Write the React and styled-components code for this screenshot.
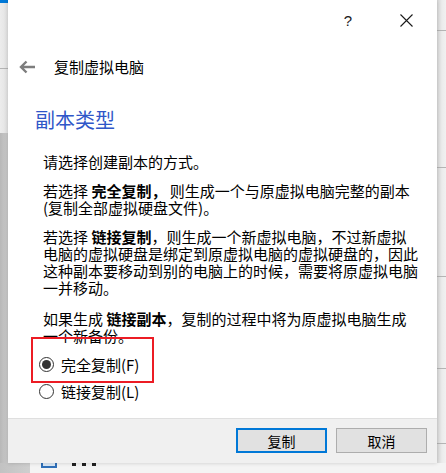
import React from "react";
import styled, { createGlobalStyle } from "styled-components";

const CJK = `"Noto Sans CJK SC", "Liberation Sans", sans-serif`;

const GlobalStyle = createGlobalStyle`
  html, body {
    margin: 0;
    padding: 0;
    background: #f2f2f2;
    overflow: hidden;
  }
  * { box-sizing: border-box; }
`;

const Page = styled.div`
  display: grid;
  grid-template-columns: 8px 429px 9px;
  grid-template-rows: 463px 10px;
  width: 446px;
  height: 473px;
  overflow: hidden;
  font-family: ${CJK};
`;

const LeftStrip = styled.div`
  display: flex;
  flex-direction: column;
`;

const StripBlock = styled.div`
  height: ${(p) => p.$h}px;
  flex: ${(p) => (p.$fill ? 1 : "none")};
  background: ${(p) => p.$bg};
  border-bottom: ${(p) => (p.$line ? "1px solid #b4b4b4" : "none")};
`;

const RightStrip = styled.div`
  display: flex;
  flex-direction: column;
  background: linear-gradient(to right, #d9d9d9, #ececec 60%, #f1f1f1);
`;

const Dialog = styled.div`
  display: flex;
  flex-direction: column;
  background: #ffffff;
  box-shadow: 0 0 4px rgba(0, 0, 0, 0.18);
  position: relative;
  z-index: 1;
`;

const TitleBar = styled.div`
  height: 40px;
  display: flex;
  justify-content: flex-end;
  align-items: center;
  padding-right: 2px;
`;

const CaptionButton = styled.div`
  width: 58px;
  height: 40px;
  display: flex;
  align-items: center;
  justify-content: center;
  color: #1a1a1a;
  font-family: "Liberation Sans", sans-serif;
  font-size: 15px;
`;

const NavRow = styled.div`
  height: 54px;
  display: flex;
  align-items: center;
  padding-left: 11px;
  gap: 19px;
`;

const NavTitle = styled.div`
  font-size: 15px;
  color: #000;
  line-height: 20px;
`;

const Main = styled.div`
  flex: 1;
  padding: 14px 0 0 27px;
`;

const Heading = styled.h1`
  margin: 0 0 21px 0;
  font-size: 20px;
  line-height: 24px;
  font-weight: normal;
  color: #2f56c8;
`;

const Body = styled.div`
  padding-left: 8px;
  width: 400px;
`;

const Para = styled.p`
  margin: 0 0 ${(p) => p.$after}px 0;
  font-size: 15px;
  line-height: 17px;
  color: #000;
  white-space: nowrap;
`;

const RadioGroup = styled.div`
  position: relative;
  display: flex;
  flex-direction: column;
  gap: 7px;
  margin: 10px 0 0 -4px;
`;

const RadioRow = styled.label`
  display: flex;
  align-items: center;
  height: 20px;
  gap: 7px;
  font-size: 15px;
  color: #000;
`;

const RadioCircle = styled.span`
  width: 15px;
  height: 15px;
  border-radius: 50%;
  border: 1px solid #333;
  background: #fff;
  display: flex;
  align-items: center;
  justify-content: center;
  &::after {
    content: "";
    width: 9px;
    height: 9px;
    border-radius: 50%;
    background: ${(p) => (p.$checked ? "#333" : "transparent")};
  }
`;

const Highlight = styled.div`
  position: absolute;
  left: -8px;
  top: -17px;
  width: 123px;
  height: 46px;
  border: 2px solid #ec1c24;
  pointer-events: none;
`;

const Footer = styled.div`
  height: 45px;
  background: #f0f0f0;
  border-top: 1px solid #dfdfdf;
  display: flex;
  justify-content: flex-end;
  align-items: flex-start;
  gap: 9px;
  padding: 9px 10px 0 0;
`;

const Button = styled.button`
  width: 91px;
  height: 25px;
  background: #e1e1e1;
  border: ${(p) => (p.$primary ? "2px solid #0078d7" : "1px solid #adadad")};
  font-family: ${CJK};
  font-size: 14px;
  color: #000;
  padding: 0;
  line-height: 20px;
`;

const BottomStrip = styled.div`
  grid-column: 1 / 4;
  display: flex;
  background: #f4f4f4;
`;

const BottomGray = styled.div`
  width: 30px;
  background: linear-gradient(to right, #c2c2c2, #cfcfcf);
`;

const BottomIcon = styled.div`
  width: 16px;
  height: 5px;
  margin-left: 11px;
  border: 2px solid #2f6fb8;
  border-top: none;
  background: #dbe8f5;
`;

const BottomText = styled.div`
  margin-left: 15px;
  display: flex;
  gap: 6px;
`;

const Dot = styled.span`
  width: 4px;
  height: 3px;
  background: #222;
`;

function BackArrow() {
  return (
    <svg width="16" height="14" viewBox="0 0 16 14">
      <path d="M16 7H2.5M7.5 1.5L2 7l5.5 5.5" fill="none" stroke="#7d7d7d" strokeWidth="2.4" />
    </svg>
  );
}

function CloseIcon() {
  return (
    <svg width="13" height="13" viewBox="0 0 13 13">
      <path d="M0.5 0.5L12.5 12.5M12.5 0.5L0.5 12.5" stroke="#1a1a1a" strokeWidth="1.1" />
    </svg>
  );
}

export default function App() {
  return (
    <>
      <GlobalStyle />
      <Page>
        <LeftStrip>
          <StripBlock $h={3} $bg="#0078d7" />
          <StripBlock $h={66} $bg="linear-gradient(to right, #ececec, #e2e2e2)" $line />
          <StripBlock $h={64} $bg="linear-gradient(to right, #ececec, #e2e2e2)" />
          <StripBlock $fill $bg="linear-gradient(to right, #b8b8b8, #cbcbcb)" />
        </LeftStrip>

        <Dialog>
          <TitleBar>
            <CaptionButton>?</CaptionButton>
            <CaptionButton>
              <CloseIcon />
            </CaptionButton>
          </TitleBar>

          <NavRow>
            <BackArrow />
            <NavTitle>复制虚拟电脑</NavTitle>
          </NavRow>

          <Main>
            <Heading>副本类型</Heading>
            <Body>
              <Para $after={12}>请选择创建副本的方式。</Para>
              <Para $after={12}>
                若选择 <b>完全复制，</b> 则生成一个与原虚拟电脑完整的副本
                <br />
                (复制全部虚拟硬盘文件)。
              </Para>
              <Para $after={14}>
                若选择 <b>链接复制</b>，则生成一个新虚拟电脑，不过新虚拟
                <br />
                电脑的虚拟硬盘是绑定到原虚拟电脑的虚拟硬盘的，因此
                <br />
                这种副本要移动到别的电脑上的时候，需要将原虚拟电脑
                <br />
                一并移动。
              </Para>
              <Para $after={0}>
                如果生成 <b>链接副本</b>，复制的过程中将为原虚拟电脑生成
                <br />
                一个新备份。
              </Para>
              <RadioGroup>
                <RadioRow>
                  <RadioCircle $checked />
                  完全复制(F)
                </RadioRow>
                <RadioRow>
                  <RadioCircle />
                  链接复制(L)
                </RadioRow>
                <Highlight />
              </RadioGroup>
            </Body>
          </Main>

          <Footer>
            <Button $primary>复制</Button>
            <Button>取消</Button>
          </Footer>
        </Dialog>

        <RightStrip>
          <StripBlock $h={31} $bg="transparent" $line />
          <StripBlock $h={137} $bg="transparent" $line />
          <StripBlock $h={109} $bg="transparent" $line />
          <StripBlock $h={92} $bg="transparent" $line />
          <StripBlock $h={75} $bg="transparent" $line />
          <StripBlock $fill $bg="transparent" />
        </RightStrip>

        <BottomStrip>
          <BottomGray />
          <BottomIcon />
          <BottomText>
            <Dot />
            <Dot />
            <Dot />
          </BottomText>
        </BottomStrip>
      </Page>
    </>
  );
}
